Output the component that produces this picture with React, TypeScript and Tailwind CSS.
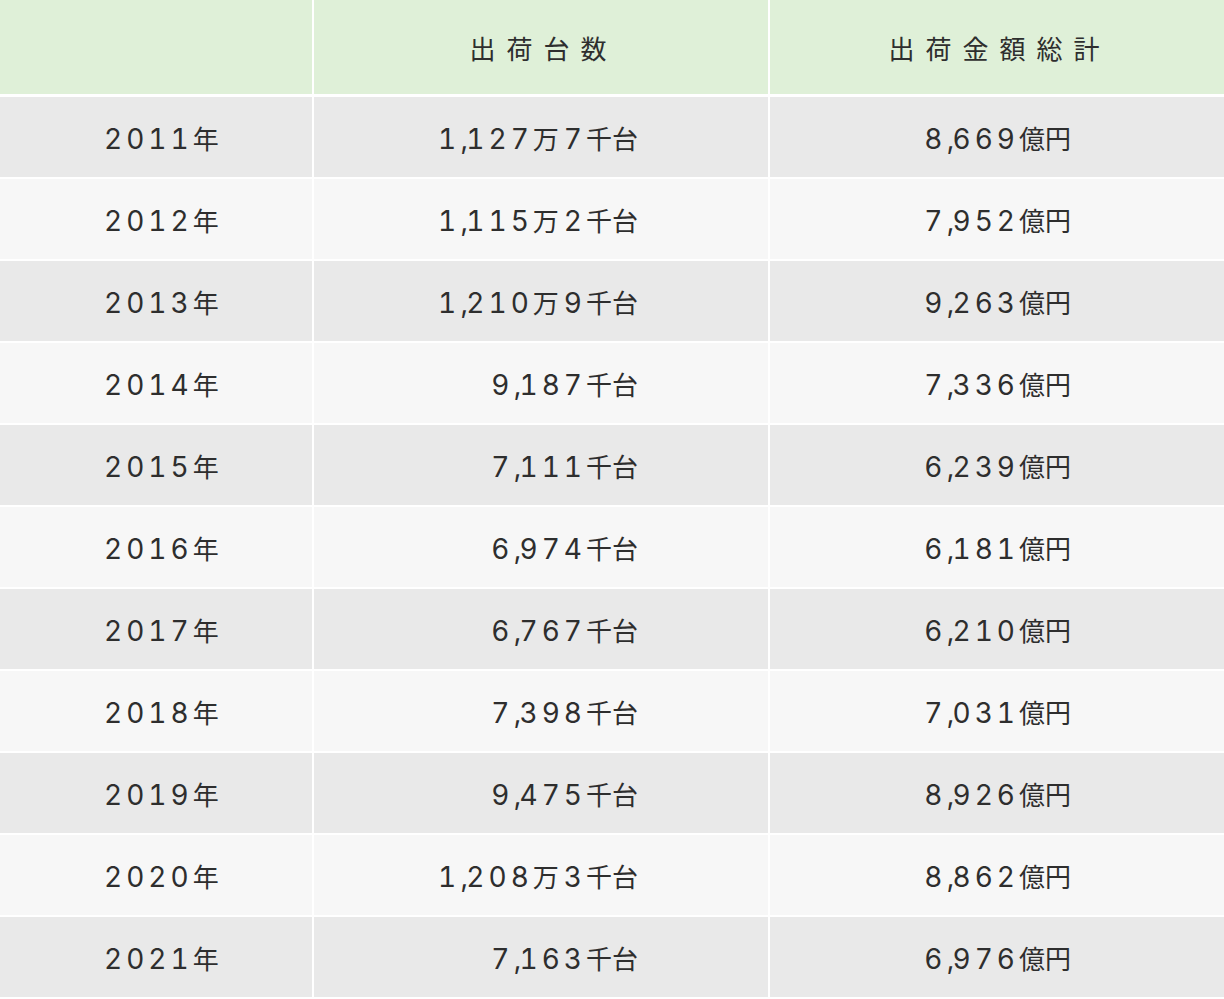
import React from "react";

const rows: [string, string, string][] = [
  ["2011年", "1,127万7千台", "8,669億円"],
  ["2012年", "1,115万2千台", "7,952億円"],
  ["2013年", "1,210万9千台", "9,263億円"],
  ["2014年", "9,187千台", "7,336億円"],
  ["2015年", "7,111千台", "6,239億円"],
  ["2016年", "6,974千台", "6,181億円"],
  ["2017年", "6,767千台", "6,210億円"],
  ["2018年", "7,398千台", "7,031億円"],
  ["2019年", "9,475千台", "8,926億円"],
  ["2020年", "1,208万3千台", "8,862億円"],
  ["2021年", "7,163千台", "6,976億円"],
];

function Val({ s }: { s: string }) {
  const parts = s.split(/([0-9]+|,|万)/).filter((p) => p.length > 0);
  return (
    <>
      {parts.map((p, i) =>
        /^[0-9]+$/.test(p) ? (
          <span
            key={i}
            className="text-[28px] tracking-[4px] tabular-nums"
            style={{ fontFamily: 'Inter, "Noto Sans", sans-serif' }}
          >
            {p}
          </span>
        ) : p === "," ? (
          <span
            key={i}
            className="text-[28px] tracking-[-2px]"
            style={{ fontFamily: 'Inter, "Noto Sans", sans-serif' }}
          >
            {p}
          </span>
        ) : p === "万" ? (
          <span key={i} className="tracking-normal mr-[5px]">
            {p}
          </span>
        ) : (
          <span key={i} className="tracking-normal">
            {p}
          </span>
        )
      )}
    </>
  );
}

export default function App() {
  return (
    <div
      className="w-[1224px] h-[999px] bg-white text-[#2e2e2e] overflow-hidden"
      style={{ fontFamily: '"Noto Sans CJK JP", "Noto Sans", sans-serif' }}
    >
      <div className="flex h-[94px] gap-[2px] mb-[3px] text-[26px]">
        <div className="w-[312px] bg-[#dff0d8]" />
        <div className="w-[454px] bg-[#dff0d8] flex items-center justify-center tracking-[11px]">
          <span className="pl-[5px]">出荷台数</span>
        </div>
        <div className="w-[454px] bg-[#dff0d8] flex items-center justify-center tracking-[11px]">
          <span className="pl-[5px]">出荷金額総計</span>
        </div>
      </div>
      {rows.map((r, i) => (
        <div key={i} className="flex h-[80px] gap-[2px] mb-[2px] text-[26px]">
          <div
            className={
              "w-[312px] flex items-center pl-[104px] pt-[4px] " +
              (i % 2 === 0 ? "bg-[#e9e9e9]" : "bg-[#f7f7f7]")
            }
          >
            <span><Val s={r[0]} /></span>
          </div>
          <div
            className={
              "w-[454px] flex items-center justify-end pr-[130px] pt-[4px] " +
              (i % 2 === 0 ? "bg-[#e9e9e9]" : "bg-[#f7f7f7]")
            }
          >
            <span><Val s={r[1]} /></span>
          </div>
          <div
            className={
              "w-[454px] flex items-center justify-end pr-[153px] pt-[4px] " +
              (i % 2 === 0 ? "bg-[#e9e9e9]" : "bg-[#f7f7f7]")
            }
          >
            <span><Val s={r[2]} /></span>
          </div>
        </div>
      ))}
    </div>
  );
}
